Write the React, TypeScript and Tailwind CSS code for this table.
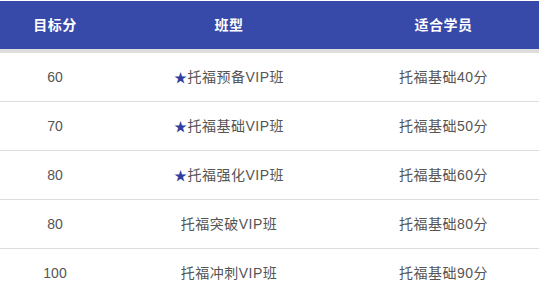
const ROWS: { score: string; name: string; star: boolean; fit: string }[] = [
  { score: "60", name: "托福预备VIP班", star: true, fit: "托福基础40分" },
  { score: "70", name: "托福基础VIP班", star: true, fit: "托福基础50分" },
  { score: "80", name: "托福强化VIP班", star: true, fit: "托福基础60分" },
  { score: "80", name: "托福突破VIP班", star: false, fit: "托福基础80分" },
  { score: "100", name: "托福冲刺VIP班", star: false, fit: "托福基础90分" },
];

export default function App() {
  return (
    <div
      className="w-[539px] h-[296px] overflow-hidden bg-white pt-px"
      style={{ fontFamily: '"Liberation Sans", "Noto Sans CJK SC", sans-serif' }}
    >
      {/* header */}
      <div className="grid grid-cols-[110px_238px_1fr] h-[48px] items-center bg-[#3749a9] text-white text-[14px] font-bold tracking-[0.5px] border-b-4 border-[#dddddd] box-content">
        <div className="text-center">目标分</div>
        <div className="text-center">班型</div>
        <div className="text-center">适合学员</div>
      </div>

      {ROWS.map((r, i) => (
        <div
          key={i}
          className="grid grid-cols-[110px_238px_1fr] h-[49px] items-center border-b border-[#dddddd] text-[14px] tracking-[0.5px] text-[#555555]"
        >
          <div className="text-center tracking-normal">{r.score}</div>
          <div className="text-center">
            {r.star && <span className="text-[13px] text-[#2f3f9f]">★</span>}
            {r.name}
          </div>
          <div className="text-center">{r.fit}</div>
        </div>
      ))}
    </div>
  );
}
